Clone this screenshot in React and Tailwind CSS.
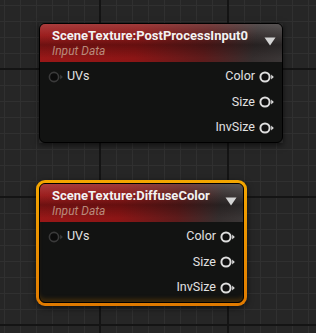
import React from "react";

const PINS = ["Color", "Size", "InvSize"];

function OutPin() {
  return (
    <svg width="16" height="12" viewBox="0 0 16 12" className="shrink-0">
      <circle cx="6" cy="6" r="4.6" fill="#101010" stroke="#dedede" strokeWidth="2" />
      <path d="M12.2 3.6 L14.8 6 L12.2 8.4 Z" fill="#dedede" />
    </svg>
  );
}

function InPin() {
  return (
    <svg width="16" height="12" viewBox="0 0 16 12" className="shrink-0">
      <circle cx="6" cy="6" r="4.6" fill="#0c0c0c" stroke="#3a3a3a" strokeWidth="1.6" />
      <path d="M12.2 3.6 L14.8 6 L12.2 8.4 Z" fill="#3a3a3a" />
    </svg>
  );
}

function Node({ title, className = "" }) {
  return (
    <div
      className={`flex h-[120px] flex-col overflow-hidden rounded-[6px] border border-black bg-[#121312] ${className}`}
    >
      <div className="relative flex h-[38px] shrink-0 items-start justify-between bg-[image:linear-gradient(to_bottom,rgba(255,255,255,0.16)_0%,rgba(255,255,255,0.03)_30%,rgba(0,0,0,0.28)_55%,rgba(0,0,0,0)_90%),linear-gradient(100deg,#9a1818_0%,#8c1515_40%,#5e1b1b_68%,#352e2e_88%,#3a3636_100%)] pl-[12px] pr-[6px]">
        <div className="flex flex-col pt-[3px]">
          <span className="font-['Roboto'] text-[13px] font-bold leading-[17px] text-[#f2f2f2]">
            {title}
          </span>
          <span className="font-['Roboto'] text-[12px] italic leading-[15px] text-[#b98b7c]">
            Input Data
          </span>
        </div>
        <svg width="12" height="9" viewBox="0 0 12 9" className="mt-[13px] shrink-0">
          <path d="M0.5 0.5 L11.5 0.5 L6 8.5 Z" fill="#d4d4d4" />
        </svg>
      </div>
      <div className="flex flex-1 flex-col pt-[2px] font-['Roboto'] text-[12.5px] text-[#e2e2e2]">
        {PINS.map((p, i) => (
          <div key={p} className="flex h-[25.5px] items-center justify-between pl-[8px] pr-[7px]">
            {i === 0 ? (
              <div className="flex items-center gap-[3px]">
                <InPin />
                <span>UVs</span>
              </div>
            ) : (
              <span />
            )}
            <div className="flex items-center gap-[4px]">
              <span>{p}</span>
              <OutPin />
            </div>
          </div>
        ))}
      </div>
    </div>
  );
}

export default function App() {
  return (
    <div className="relative h-[333px] w-[316px] overflow-hidden bg-[#262626] bg-[image:linear-gradient(to_right,#141414_2px,transparent_2px),linear-gradient(to_bottom,#141414_2px,transparent_2px),linear-gradient(to_right,#303030_1px,transparent_1px),linear-gradient(to_bottom,#303030_1px,transparent_1px)] bg-[length:128px_128px,128px_128px,16px_16px,16px_16px] bg-[position:99px_68px,99px_68px,4px_5px,4px_5px]">
      <div className="absolute left-[39px] top-[23px] w-[244px] shadow-[0_2px_6px_rgba(0,0,0,0.6)]">
        <Node title="SceneTexture:PostProcessInput0" />
      </div>
      <div className="absolute left-[36px] top-[180px] w-[211px] rounded-[9px] bg-[linear-gradient(to_bottom,#f4a600,#e07a00)] p-[3px] shadow-[0_2px_6px_rgba(0,0,0,0.6)]">
        <Node
          title="SceneTexture:DiffuseColor"
          className="shadow-[inset_0_-5px_4px_-2px_rgba(120,70,0,0.45)]"
        />
      </div>
    </div>
  );
}
